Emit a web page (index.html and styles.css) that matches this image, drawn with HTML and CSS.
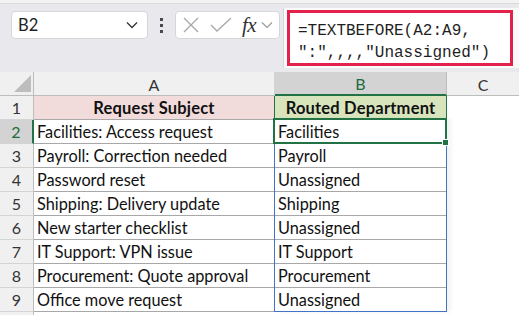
FILE: index.html
```html
<!DOCTYPE html>
<html lang="en">
<head>
  <meta charset="UTF-8">
  <title>TEXTBEFORE routing</title>
  <link rel="stylesheet" href="styles.css">
</head>
<body>
  <div class="top-strip"></div>
  <div class="formula-bar">
    <div class="name-box">
      <span>B2</span>
      <svg class="chev" width="12" height="8" viewBox="0 0 12 8"><polyline points="1,1.5 6,6.5 11,1.5" fill="none" stroke="#333" stroke-width="1.3"/></svg>
    </div>
    <div class="grip"><i></i><i></i><i></i></div>
    <div class="fx-box">
      <svg width="16" height="16" viewBox="0 0 16 16"><path d="M1 1 L15 15 M15 1 L1 15" stroke="#a8a8a8" stroke-width="1.3" fill="none"/></svg>
      <svg width="22" height="16" viewBox="0 0 22 16"><polyline points="1,8 7,14 21,1" fill="none" stroke="#a8a8a8" stroke-width="1.3"/></svg>
      <span class="fx">fx</span>
      <svg class="chev" width="12" height="8" viewBox="0 0 12 8"><polyline points="1,1.5 6,6.5 11,1.5" fill="none" stroke="#9a9a9a" stroke-width="1.2"/></svg>
    </div>
    <div class="formula-input">
      <div class="formula-mark">=TEXTBEFORE(A2:A9,<br>":",,,,"Unassigned")</div>
    </div>
  </div>

  <div class="sheet">
    <div class="hdr corner"><span class="tri"></span></div>
    <div class="hdr col">A</div>
    <div class="hdr col sel">B</div>
    <div class="hdr col last">C</div>

    <div class="hdr row">1</div>
    <div class="cell title pink">Request Subject</div>
    <div class="cell title green">Routed Department</div>
    <div class="cell empty"></div>

    <div class="hdr row sel">2</div>
    <div class="cell">Facilities: Access request</div>
    <div class="cell">Facilities</div>
    <div class="cell empty"></div>

    <div class="hdr row">3</div>
    <div class="cell">Payroll: Correction needed</div>
    <div class="cell">Payroll</div>
    <div class="cell empty"></div>

    <div class="hdr row">4</div>
    <div class="cell">Password reset</div>
    <div class="cell">Unassigned</div>
    <div class="cell empty"></div>

    <div class="hdr row">5</div>
    <div class="cell">Shipping: Delivery update</div>
    <div class="cell">Shipping</div>
    <div class="cell empty"></div>

    <div class="hdr row">6</div>
    <div class="cell">New starter checklist</div>
    <div class="cell">Unassigned</div>
    <div class="cell empty"></div>

    <div class="hdr row">7</div>
    <div class="cell">IT Support: VPN issue</div>
    <div class="cell">IT Support</div>
    <div class="cell empty"></div>

    <div class="hdr row">8</div>
    <div class="cell">Procurement: Quote approval</div>
    <div class="cell">Procurement</div>
    <div class="cell empty"></div>

    <div class="hdr row">9</div>
    <div class="cell">Office move request</div>
    <div class="cell">Unassigned</div>
    <div class="cell empty"></div>

    <div class="hdr row"></div>
    <div class="cell empty"></div>
    <div class="cell empty"></div>
    <div class="cell empty"></div>

    <div class="spill-range"></div>
    <div class="active-cell"><span class="fill-handle"></span></div>
  </div>
</body>
</html>
```

FILE: styles.css
```css
html, body {
  margin: 0;
  padding: 0;
  height: 100%;
  overflow: hidden;
  background: #ffffff;
  font-family: Lato, "Open Sans", sans-serif;
  color: #1a1a1a;
}
.top-strip {
  height: 3px;
  background: #f3f3f3;
  border-bottom: 1px solid #dadada;
}
.formula-bar {
  height: 68px;
  background: #e9e9ed;
  display: flex;
  align-items: flex-start;
  box-sizing: border-box;
  padding: 7px 0 0 11px;
}
.name-box {
  width: 137px;
  height: 28px;
  box-sizing: border-box;
  background: #fff;
  border: 1px solid #d6d6d9;
  border-radius: 4px;
  display: flex;
  align-items: center;
  justify-content: space-between;
  padding: 0 9px 0 6px;
  font-size: 16.5px;
  color: #222;
}
.grip {
  width: 27px;
  height: 28px;
  display: flex;
  flex-direction: column;
  align-items: center;
  justify-content: center;
  gap: 3px;
}
.grip i {
  width: 3px;
  height: 3px;
  background: #4a4a4a;
  display: block;
}
.fx-box {
  width: 105px;
  height: 28px;
  box-sizing: border-box;
  background: #fff;
  border: 1px solid #d6d6d9;
  border-radius: 4px;
  display: flex;
  align-items: center;
  padding: 0 2px 0 7px;
}
.fx-box svg:nth-child(1) { margin-right: 11px; }
.fx-box svg:nth-child(2) { margin-right: 10px; }
.fx {
  font-family: "Liberation Serif", serif;
  font-style: italic;
  font-size: 21px;
  color: #333;
  margin-right: 5px;
  letter-spacing: -0.5px;
}
.formula-input {
  flex: 1;
  margin-left: 3px;
  margin-top: -3px;
  height: 60px;
  background: #fafafa;
  border-left: 1px solid #d6d6d9;
  padding: 2px 0 0 3px;
  box-sizing: border-box;
}
.formula-mark {
  width: 226px;
  height: 56px;
  box-sizing: border-box;
  border: 3px solid #e2214d;
  background: #fff;
  font-family: "Liberation Mono", monospace;
  font-size: 16px;
  line-height: 22px;
  padding: 7px 0 0 8px;
  color: #1f1f1f;
  white-space: nowrap;
}
.sheet {
  position: relative;
  display: grid;
  grid-template-columns: 34px 241px 172px 1fr;
  grid-auto-rows: 24px;
  font-size: 15px;
}
.hdr {
  background: #f0f0f0;
  color: #333;
  display: flex;
  align-items: center;
  justify-content: center;
  box-sizing: border-box;
}
.hdr.corner {
  border-right: 1px solid #bdbdbd;
  border-bottom: 1px solid #bdbdbd;
  position: relative;
}
.tri {
  position: absolute;
  right: 2px;
  bottom: 3px;
  width: 0;
  height: 0;
  border-left: 17px solid transparent;
  border-bottom: 17px solid #bdbdbd;
}
.hdr.col {
  border-right: 1px solid #d4d4d4;
  border-bottom: 1px solid #bdbdbd;
  padding-top: 1px;
  font-size: 16px;
}
.hdr.col.last {
  border-right: none;
}
.hdr.col.sel {
  background: #d3d3d3;
  color: #1e6b41;
  border-bottom: 2px solid #217346;
  border-right-color: #bdbdbd;
}
.hdr.row {
  border-right: 1px solid #bdbdbd;
  border-bottom: 1px solid #d4d4d4;
  font-size: 16px;
}
.hdr.row.sel {
  background: #d3d3d3;
  color: #1e6b41;
  border-right: 2px solid #217346;
}
.cell {
  box-sizing: border-box;
  border-right: 1px solid #a8a8a8;
  border-bottom: 1px solid #a8a8a8;
  padding: 0 3px;
  display: flex;
  align-items: center;
  white-space: nowrap;
  overflow: hidden;
  font-size: 16.3px;
  color: #111;
}
.cell.empty {
  border: none;
}
.cell.title {
  justify-content: center;
  font-weight: bold;
  font-size: 16.5px;
  letter-spacing: 0.2px;
}
.cell.pink {
  background: #f2dcdb;
}
.cell.green {
  background: #d8e4bc;
  border-left: 1px solid #217346;
  border-right: 1px solid #217346;
  margin-left: -1px;
}
.spill-range {
  position: absolute;
  left: 274px;
  top: 47px;
  width: 173px;
  height: 193px;
  box-sizing: border-box;
  border: 1px solid #4472c4;
  box-shadow: 4px 0 4px rgba(0, 0, 0, 0.05);
  pointer-events: none;
}
.active-cell {
  position: absolute;
  left: 273px;
  top: 46px;
  width: 174px;
  height: 26px;
  box-sizing: border-box;
  border: 2px solid #217346;
  pointer-events: none;
}
.fill-handle {
  position: absolute;
  right: -4px;
  bottom: -4px;
  width: 5px;
  height: 5px;
  background: #217346;
  border: 1px solid #fff;
}
```
